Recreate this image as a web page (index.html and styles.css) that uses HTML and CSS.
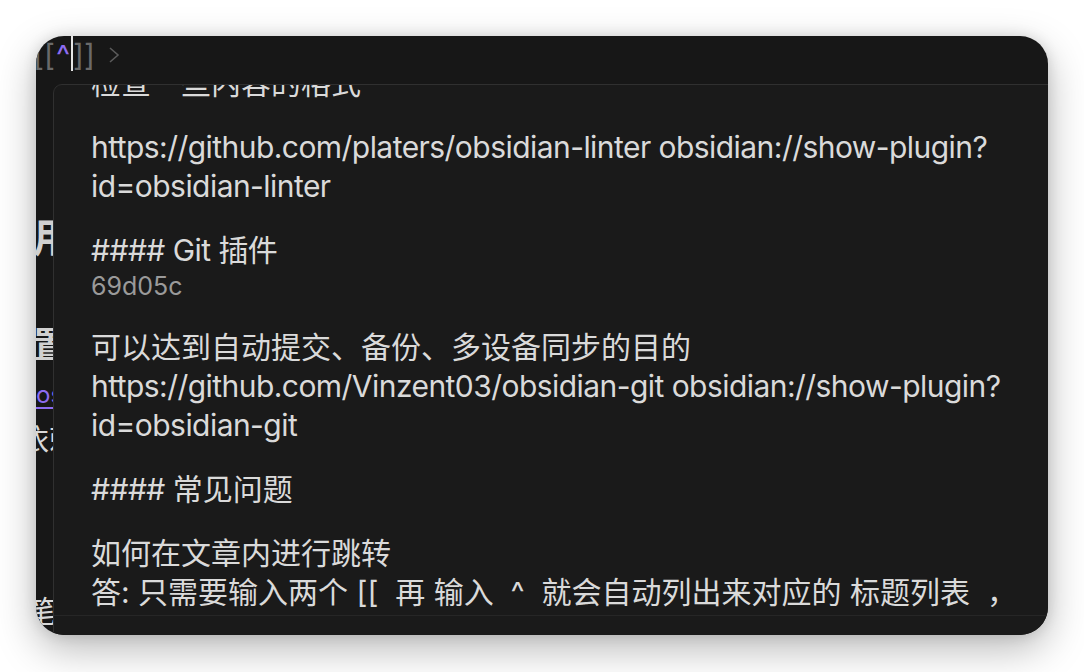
FILE: index.html
```html
<!DOCTYPE html>
<html lang="zh-CN">
<head>
<meta charset="utf-8">
<title>Obsidian 预览</title>
<link rel="stylesheet" href="styles.css">
</head>
<body>
<div class="stage">
  <div class="window">
    <div class="editor">
      <div class="top-line"><span class="br">[[</span><span class="caret">^</span><span class="cursor"></span><span class="br">]]</span><svg class="chev" width="12" height="18" viewBox="0 0 12 18"><polyline points="2,2 10,9 2,16" fill="none" stroke="#5a5a5a" stroke-width="1.6"/></svg></div>
      <div class="bg-h1">用途</div>
      <div class="bg-h2">置插件</div>
      <div class="bg-link">os</div>
      <div class="bg-text shifted">依赖</div>
      <div class="bg-text bottom">笔记</div>
    </div>
    <div class="popover">
      <div class="scroll">
        <div class="content">
          <p class="zh">检查一些内容的格式</p>
          <p>https://github.com/platers/obsidian-linter obsidian://show-plugin?<br>id=obsidian-linter</p>
          <p>#### Git 插件<span class="hash">69d05c</span></p>
          <p><span class="zh">可以达到自动提交、备份、多设备同步的目的</span><br>https://github.com/Vinzent03/obsidian-git obsidian://show-plugin?<br>id=obsidian-git</p>
          <p>#### <span class="zh">常见问题</span></p>
          <p class="zh">如何在文章内进行跳转<br>答: 只需要输入两个 [[&nbsp; 再 输入&nbsp;&nbsp;^&nbsp;&nbsp;就会自动列出来对应的 标题列表&nbsp;&nbsp;，</p>
        </div>
      </div>
      <div class="footer"></div>
    </div>
  </div>
</div>
</body>
</html>
```

FILE: styles.css
```css
* { box-sizing: border-box; }
html, body { margin: 0; padding: 0; background: #ffffff; }
body {
  font-family: Inter, "Noto Sans CJK SC", sans-serif;
  width: 1084px;
  height: 672px;
  overflow: hidden;
}
.stage {
  padding: 36px 36px 37px 36px;
}
.window {
  position: relative;
  width: 1012px;
  height: 599px;
  border-radius: 28px;
  overflow: hidden;
  background: #171717;
  box-shadow: 0 14px 40px rgba(0,0,0,0.28), 0 0 14px rgba(0,0,0,0.12);
}
.editor {
  margin-left: -3px;
  color: #d8d8d8;
  font-size: 30px;
  line-height: 39px;
}
.top-line {
  display: flex;
  align-items: center;
  height: 39px;
  color: #6a6a6a;
}
.br { color: #6a6a6a; }
.caret { color: #8d6cf2; margin-left: 1px; }
.cursor {
  display: inline-block;
  width: 2px;
  height: 37px;
  background: #e6e6e6;
  margin: -2px 0 0 1px;
  align-self: flex-start;
}
.chev { margin-left: 13px; margin-top: -1px; }
.bg-h1 {
  margin-top: 141px;
  font-size: 40px;
  line-height: 44px;
  font-weight: 700;
  color: #d0d0d0;
}
.bg-h2 {
  margin-top: 63px;
  font-size: 36px;
  line-height: 44px;
  font-weight: 700;
  color: #d0d0d0;
}
.bg-link {
  margin-top: 8px;
  margin-left: 3px;
  color: #8d6cf2;
  font-size: 24px;
  text-decoration: underline;
  text-underline-offset: 4px;
}
.bg-text { margin-top: 6px; }
.shifted { margin-left: -14px; }
.bottom { margin-top: 133px; margin-left: -6px; }
.popover {
  position: absolute;
  left: 17px;
  top: 48px;
  right: -30px;
  bottom: -30px;
  background: #1a1a1a;
  border: 1px solid #303030;
  border-radius: 9px;
  display: flex;
  flex-direction: column;
}
.scroll {
  height: 531px;
  overflow: hidden;
  border-bottom: 1px solid #262626;
}
.content {
  margin-top: -21px;
  padding-left: 37px;
  color: #dadada;
  font-size: 30px;
  letter-spacing: -0.55px;
  line-height: 39px;
}
.content p { margin: 0 0 25px; }
.content .zh { letter-spacing: 0; }
.hash {
  display: block;
  color: #9a9a9a;
  font-size: 25px;
  letter-spacing: 0;
  line-height: 33px;
}
.footer { flex: 1; }
```
